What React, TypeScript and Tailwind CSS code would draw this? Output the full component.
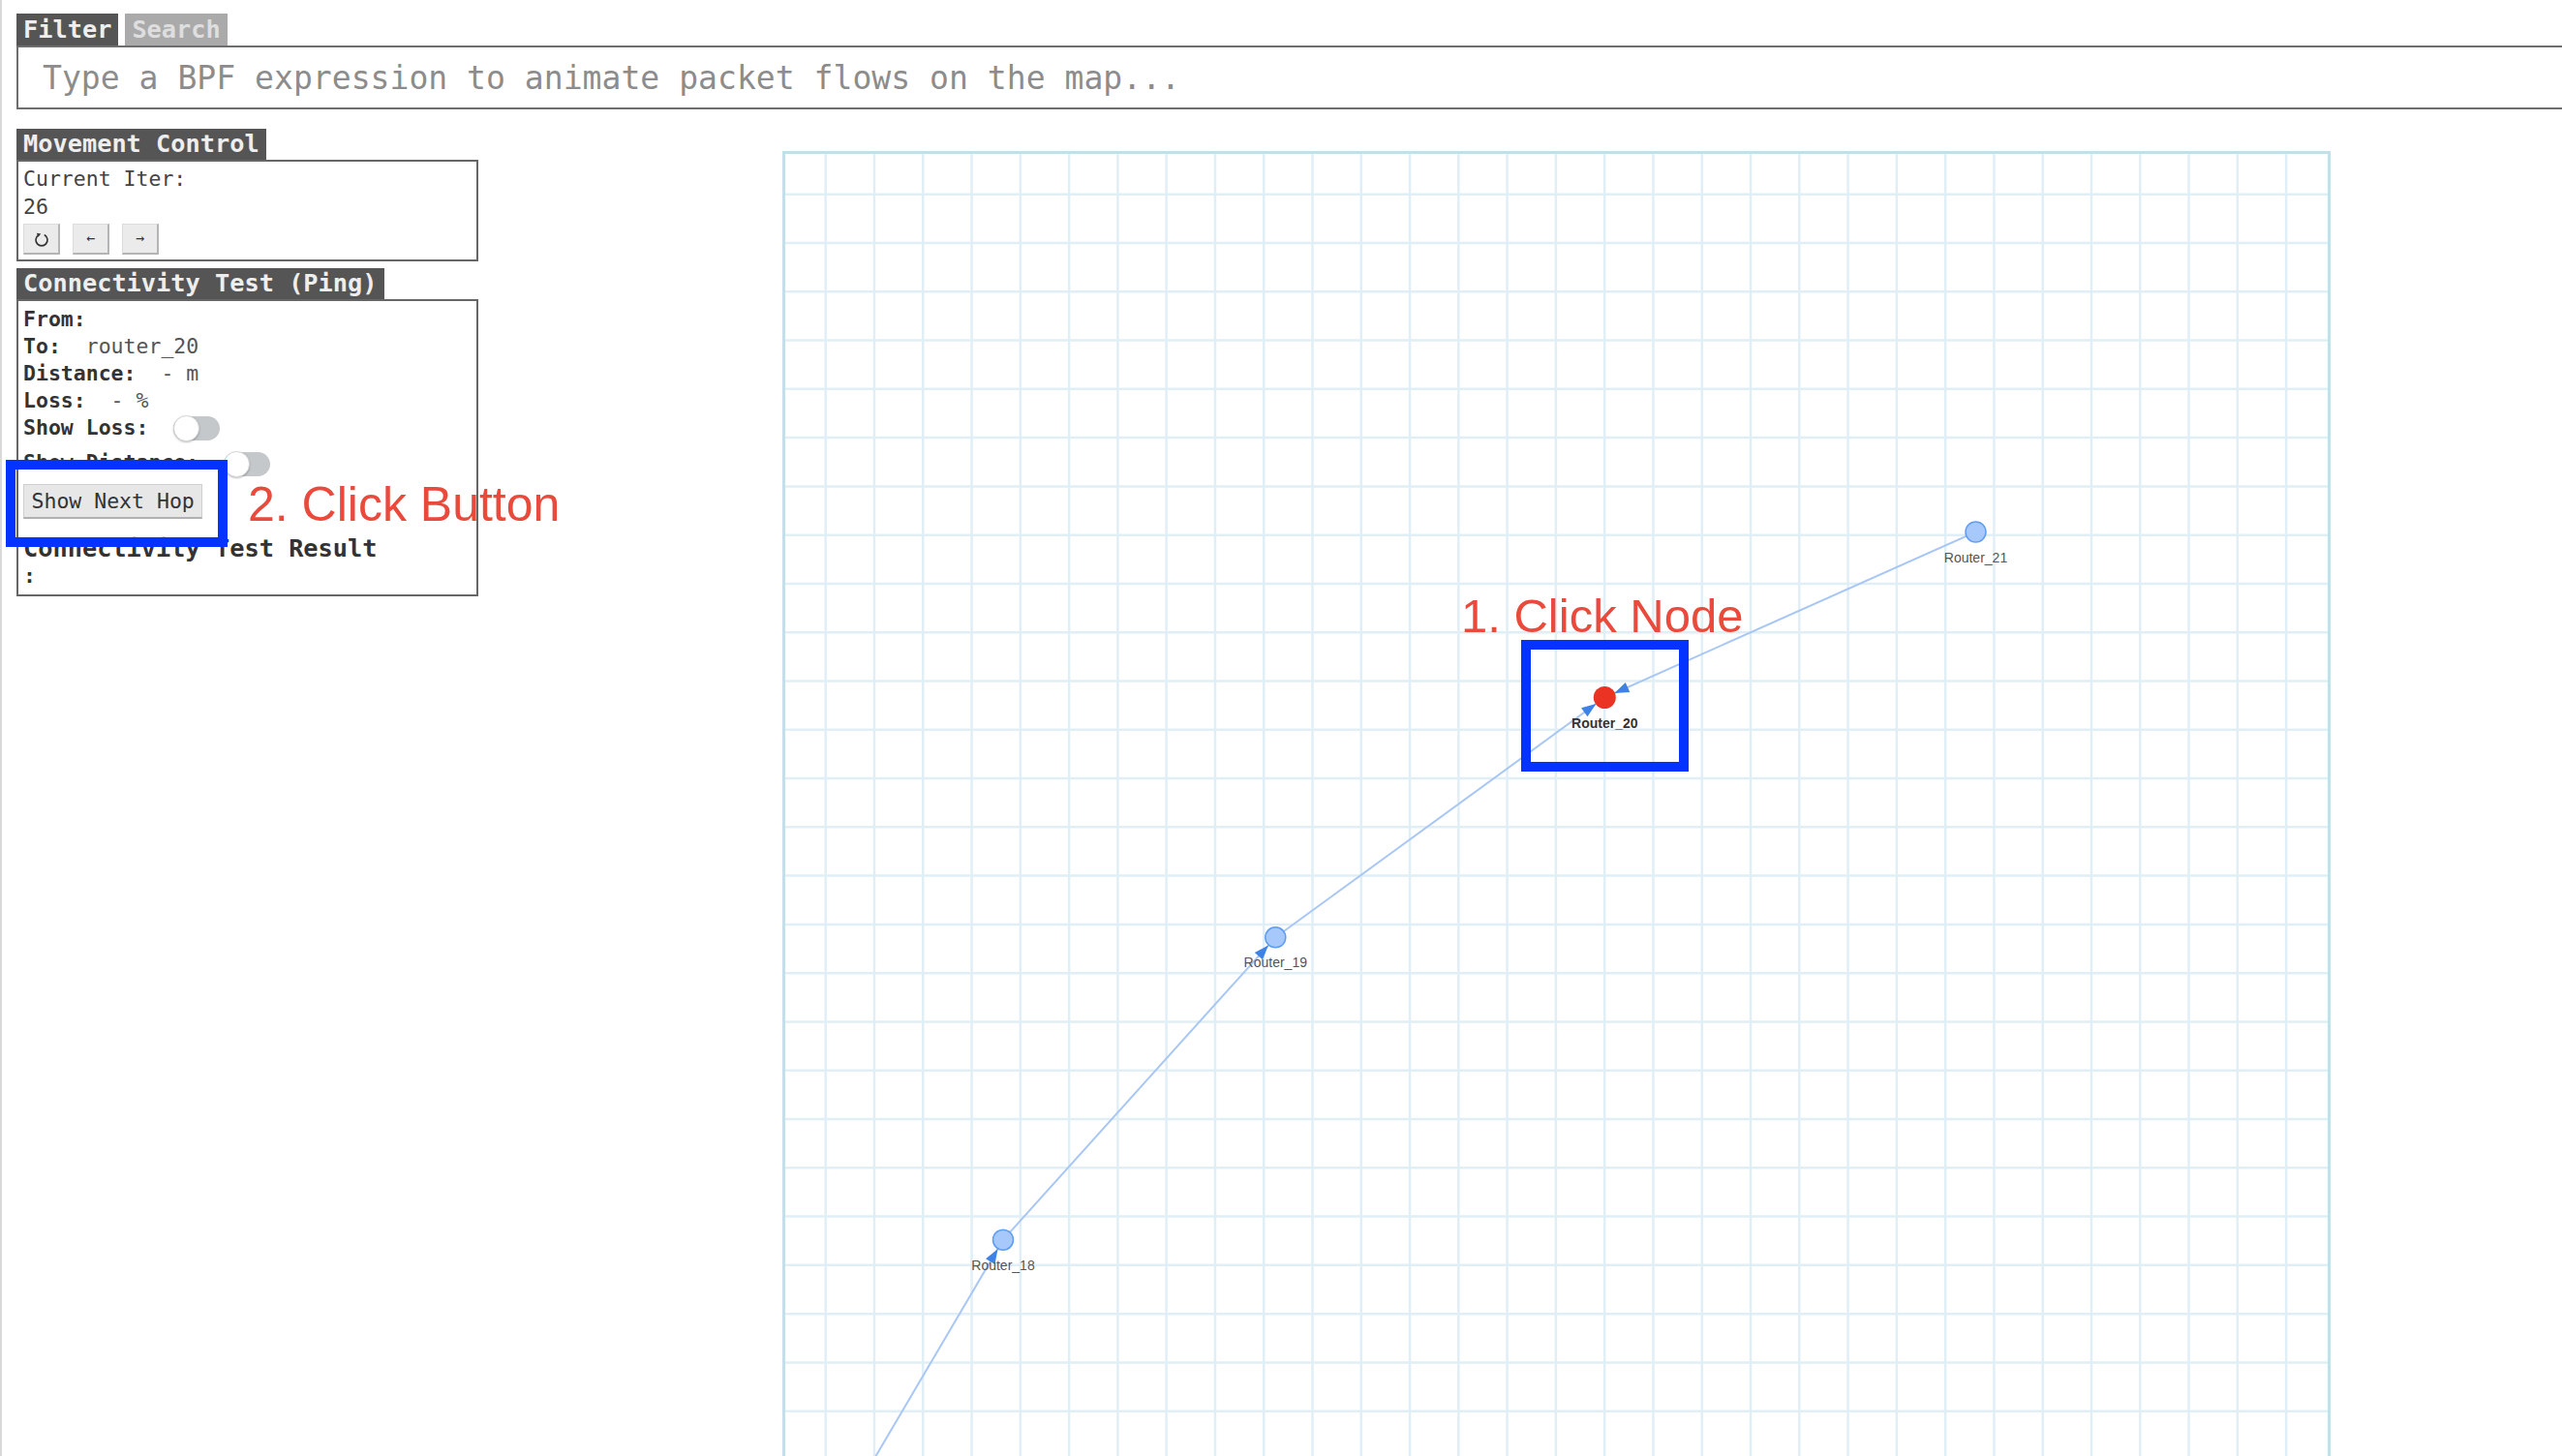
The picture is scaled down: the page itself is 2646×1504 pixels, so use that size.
import React from 'react';

// map geometry, measured from the inner edge of the map border
const STEP = 50.28;
const OFF = 41.7;
const MAP_W = 1593;
const MAP_H = 1394;

type Node = { id: string; x: number; y: number; active?: boolean };

const nodes: Node[] = [
  { id: 'Router_21', x: 1229.5, y: 390.5 },
  { id: 'Router_20', x: 846.3, y: 561.5, active: true },
  { id: 'Router_19', x: 506.3, y: 809.3 },
  { id: 'Router_18', x: 225, y: 1121.7 },
];

// [x1, y1, x2, y2] source -> target
const edges: [number, number, number, number][] = [
  [1229.5, 390.5, 846.3, 561.5],
  [506.3, 809.3, 846.3, 561.5],
  [225, 1121.7, 506.3, 809.3],
  [20, 1470, 225, 1121.7],
];

function arrowPoints(x1: number, y1: number, x2: number, y2: number, r: number) {
  const len = Math.hypot(x2 - x1, y2 - y1);
  const ux = (x2 - x1) / len;
  const uy = (y2 - y1) / len;
  const tx = x2 - ux * r;
  const ty = y2 - uy * r;
  const bx = tx - ux * 15;
  const by = ty - uy * 15;
  const px = -uy * 5.5;
  const py = ux * 5.5;
  return `${tx},${ty} ${bx + px},${by + py} ${bx - px},${by - py}`;
}

const Toggle: React.FC<{ className?: string }> = ({ className }) => (
  <div className={`relative h-[25px] w-[48px] shrink-0 rounded-full bg-[#c4c8cb] ${className ?? ''}`}>
    <div className="absolute left-0 top-[-1px] h-[27px] w-[27px] rounded-full border border-[#d6d6d6] bg-white shadow-[0_1px_2px_rgba(0,0,0,0.25)]" />
  </div>
);

const IterButton: React.FC<{ children: React.ReactNode }> = ({ children }) => (
  <button className="flex h-[32px] w-[38px] items-center justify-center border border-[#dcdcdc] border-b-2 border-r-2 border-b-[#b4b4b4] border-r-[#b4b4b4] bg-[#ebebeb] text-[15px] leading-none text-[#333]">
    {children}
  </button>
);

const ReloadIcon = () => (
  <svg width="18" height="18" viewBox="0 0 24 24" fill="none" stroke="#333" strokeWidth="2.2" strokeLinecap="round">
    <path d="M16.5 6.6A8 8 0 1 1 7.5 6.6" />
    <polygon points="5.2,3.6 11,4.6 7.2,9" fill="#333" stroke="none" />
  </svg>
);

const MapView = () => (
  <div className="ml-[314px] mt-[23px] h-[1400px] w-[1599px] shrink-0 border-[3px] border-[#c3dfea]">
    <svg width={MAP_W} height={MAP_H} className="block">
      {Array.from({ length: 31 }, (_, k) => (
        <line key={`v${k}`} x1={OFF + k * STEP} y1={0} x2={OFF + k * STEP} y2={MAP_H} stroke="#e0eff6" strokeWidth={2.5} />
      ))}
      {Array.from({ length: 28 }, (_, k) => (
        <line key={`h${k}`} x1={0} y1={OFF + k * STEP} x2={MAP_W} y2={OFF + k * STEP} stroke="#e0eff6" strokeWidth={2.5} />
      ))}
      {edges.map(([x1, y1, x2, y2], i) => (
        <line key={`e${i}`} x1={x1} y1={y1} x2={x2} y2={y2} stroke="#a9c7f4" strokeWidth={2} />
      ))}
      {edges.map(([x1, y1, x2, y2], i) => (
        <polygon key={`a${i}`} points={arrowPoints(x1, y1, x2, y2, 11)} fill="#3f82e6" />
      ))}
      {nodes.map((n) => (
        <g key={n.id}>
          {n.active ? (
            <circle cx={n.x} cy={n.y} r={11.5} fill="#ea3323" />
          ) : (
            <circle cx={n.x} cy={n.y} r={10.5} fill="#a6c8fa" stroke="#5f9df2" strokeWidth={1.5} />
          )}
          <text
            x={n.x}
            y={n.y + 31}
            textAnchor="middle"
            fontFamily="'Liberation Sans', Arial, sans-serif"
            fontSize={14}
            fontWeight={n.active ? 700 : 400}
            fill={n.active ? '#333' : '#555'}
          >
            {n.id}
          </text>
        </g>
      ))}
    </svg>
  </div>
);

export default function App() {
  return (
    <div className="relative h-[1504px] w-[2646px] overflow-hidden border-l-2 border-[#d9d9d9] bg-white font-['DejaVu_Sans_Mono',monospace]">
      {/* filter bar */}
      <div className="pl-[15px] pt-[14px]">
        <div className="flex gap-[7px] text-[25.3px] font-bold leading-[33px]">
          <div className="bg-[#555] px-[7px] text-[#eee]">Filter</div>
          <div className="bg-[#aaa] px-[7px] text-[#dedede]">Search</div>
        </div>
        <input
          readOnly
          placeholder="Type a BPF expression to animate packet flows on the map..."
          className="block h-[66px] w-[2700px] border-2 border-[#6e6e6e] pl-[25px] text-[33.1px] outline-none placeholder:text-[#8c8c8c]"
        />
      </div>

      <div className="flex items-start pl-[15px] pt-[20px]">
        {/* left panel */}
        <div className="w-[477px] shrink-0">
          <div className="h-[32px] w-fit bg-[#555] px-[7px] text-[25.3px] font-bold leading-[32px] text-[#eee]">Movement Control</div>
          <div className="border-2 border-[#666] px-[5px] pb-[5px] pt-[3px] text-[21.5px] leading-[29px] text-[#444]">
            <div>Current Iter:</div>
            <div>26</div>
            <div className="mt-[3px] flex gap-[13px]">
              <IterButton>
                <ReloadIcon />
              </IterButton>
              <IterButton>←</IterButton>
              <IterButton>→</IterButton>
            </div>
          </div>

          <div className="mt-[7px] h-[32px] w-fit bg-[#555] px-[7px] text-[25.3px] font-bold leading-[32px] text-[#eee]">Connectivity Test (Ping)</div>
          <div className="border-2 border-[#666] px-[5px] pb-[5px] pt-[5px] text-[21.5px] leading-[28px] text-[#555]">
            <div className="font-bold text-[#333]">From:</div>
            <div className="whitespace-pre">
              <b className="text-[#333]">To:</b>  router_20
            </div>
            <div className="whitespace-pre">
              <b className="text-[#333]">Distance:</b>  - m
            </div>
            <div className="whitespace-pre">
              <b className="text-[#333]">Loss:</b>  - %
            </div>
            <div className="flex h-[28px] items-center">
              <b className="text-[#333]">Show Loss:</b>
              <Toggle className="ml-[26px]" />
            </div>
            <div className="mt-[8px] flex h-[28px] items-start">
              <span className="h-[20px] overflow-hidden font-bold text-[#333]">Show Distance:</span>
              <Toggle className="ml-[26px] mt-[3px]" />
            </div>
            <div className="mt-[8px]">
              <button className="h-[36px] border border-[#cfcfcf] border-b-2 border-b-[#b0b0b0] bg-[#e7e7e7] px-[7.5px] text-[21.5px] leading-none text-[#333]">
                Show Next Hop
              </button>
            </div>
            <div className="mt-[17px] text-[25.3px] font-bold text-[#333]">Connectivity Test Result</div>
            <div className="font-bold text-[#333]">:</div>
          </div>
        </div>

        <MapView />
      </div>

      {/* tutorial annotations drawn over the page */}
      <div className="pointer-events-none absolute left-[4px] top-[475px] h-[90px] w-[229px] border-[10px] border-[#0433ff]" />
      <div className="pointer-events-none absolute left-[254px] top-[491px] whitespace-nowrap font-['Liberation_Sans',Arial,sans-serif] text-[50px] leading-[60px] text-[#ea4a3c]">
        2. Click Button
      </div>
      <div className="pointer-events-none absolute left-[1569px] top-[661px] h-[136px] w-[173px] border-[10px] border-[#0433ff]" />
      <div className="pointer-events-none absolute left-[1507px] top-[606px] whitespace-nowrap font-['Liberation_Sans',Arial,sans-serif] text-[49px] leading-[60px] text-[#ea4a3c]">
        1. Click Node
      </div>
    </div>
  );
}
